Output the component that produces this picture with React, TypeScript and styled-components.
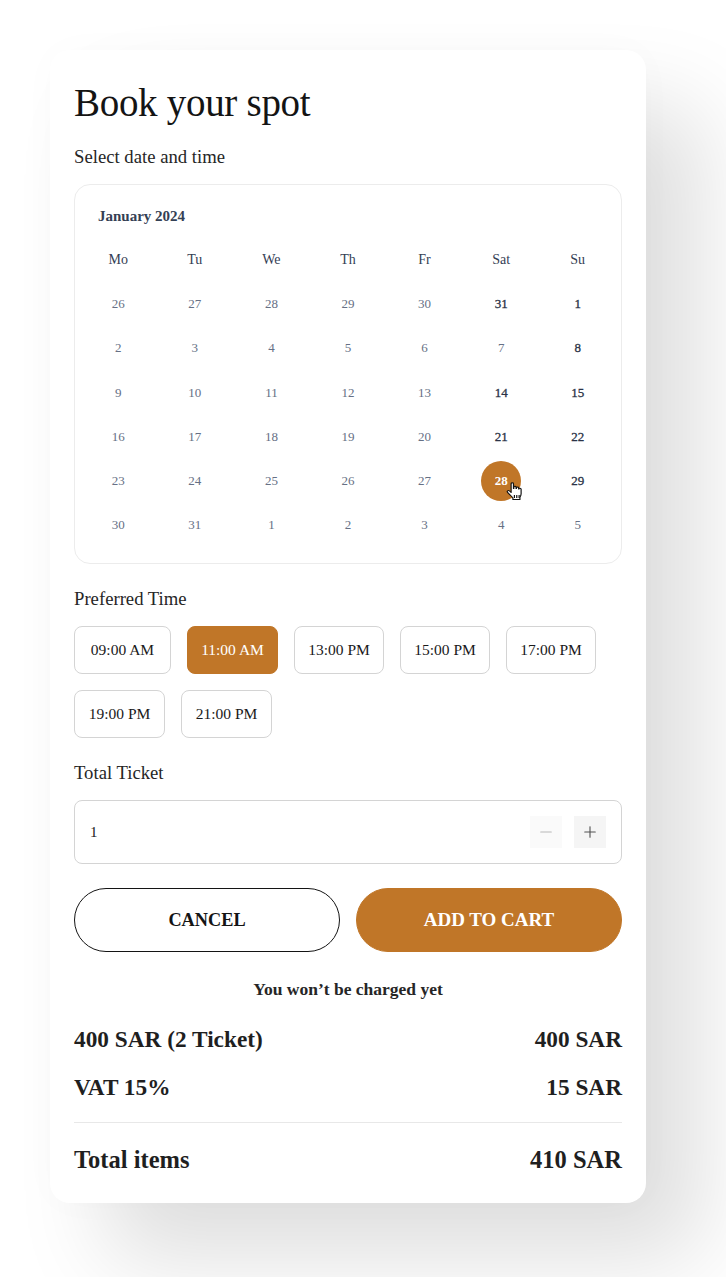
import { Minus, Plus } from "lucide-react";
import styled, { createGlobalStyle } from "styled-components";

const GlobalStyle = createGlobalStyle`
  html, body {
    margin: 0;
    padding: 0;
    background: #fff;
  }
  body {
    font-family: "Liberation Serif", "Times New Roman", serif;
    color: #1a1a1a;
  }
`;

const Page = styled.div`
  width: 726px;
  height: 1277px;
  padding: 50px 80px 74px 50px;
  box-sizing: border-box;
  overflow: hidden;
`;

const Card = styled.section`
  display: flex;
  flex-direction: column;
  height: 1153px;
  box-sizing: border-box;
  padding: 24px;
  background: #fff;
  border-radius: 20px;
  box-shadow: 56px 56px 90px rgba(0, 0, 0, 0.13), 0 0 40px rgba(0, 0, 0, 0.02);
`;

const Title = styled.h1`
  margin: 0 0 14px;
  font-size: 39px;
  line-height: 58px;
  font-weight: 400;
  letter-spacing: -0.3px;
  color: #141414;
`;

const Label = styled.div`
  margin-bottom: 16px;
  font-size: 18.7px;
  line-height: 22px;
  color: #262626;
`;

const Calendar = styled.div`
  height: 380px;
  box-sizing: border-box;
  margin-bottom: 24px;
  padding: 20px 5px 0;
  border: 1px solid #ececec;
  border-radius: 16px;
`;

const Month = styled.div`
  padding-left: 18px;
  margin-bottom: 11px;
  font-size: 15px;
  line-height: 22px;
  font-weight: 700;
  color: #344054;
`;

const CalendarGrid = styled.div`
  display: grid;
  grid-template-columns: repeat(7, 1fr);
  grid-auto-rows: 44.2px;
  width: 536px;
`;

const Cell = styled.div`
  position: relative;
  display: flex;
  align-items: center;
  justify-content: center;
`;

const Weekday = styled.span`
  font-size: 14px;
  color: #344054;
`;

const Day = styled.span<{ $tone: "muted" | "strong" | "selected" }>`
  display: flex;
  align-items: center;
  justify-content: center;
  width: 40px;
  height: 40px;
  border-radius: 50%;
  font-size: 13px;
  font-weight: ${({ $tone }) => ($tone === "selected" ? 700 : 400)};
  -webkit-text-stroke: ${({ $tone }) => ($tone === "strong" ? "0.3px" : "0")};
  color: ${({ $tone }) =>
    $tone === "selected" ? "#fff" : $tone === "strong" ? "#2b3347" : "#667085"};
  background: ${({ $tone }) => ($tone === "selected" ? "#c07628" : "transparent")};
`;

const Pointer = styled.svg`
  position: absolute;
  left: 42px;
  top: 23px;
  width: 20px;
  height: 19px;
`;

const TimeList = styled.div`
  display: flex;
  flex-wrap: wrap;
  gap: 16px 16px;
  margin-bottom: 24px;
`;

const TimeChip = styled.button<{ $width: number; $active?: boolean }>`
  width: ${({ $width }) => $width}px;
  height: 48px;
  padding: 0;
  border: 1px solid ${({ $active }) => ($active ? "#c07628" : "#d4d4d4")};
  border-radius: 8px;
  background: ${({ $active }) => ($active ? "#c07628" : "#fff")};
  color: ${({ $active }) => ($active ? "#fff" : "#1a1a1a")};
  font: 400 15.5px "Liberation Serif", serif;
`;

const Stepper = styled.div`
  display: flex;
  align-items: center;
  gap: 12px;
  height: 64px;
  box-sizing: border-box;
  margin-bottom: 24px;
  padding: 0 15px;
  border: 1px solid #d4d4d4;
  border-radius: 8px;
  font-size: 15px;
  color: #1a1a1a;
`;

const StepperValue = styled.span`
  flex: 1;
`;

const StepButton = styled.button<{ $disabled?: boolean }>`
  display: flex;
  align-items: center;
  justify-content: center;
  width: 32px;
  height: 32px;
  padding: 0;
  border: 0;
  background: ${({ $disabled }) => ($disabled ? "#fafafa" : "#f5f5f5")};
  color: ${({ $disabled }) => ($disabled ? "#b8b8b8" : "#525252")};
`;

const Actions = styled.div`
  display: grid;
  grid-template-columns: 1fr 1fr;
  gap: 16px;
  margin-bottom: 24px;
`;

const ActionButton = styled.button<{ $primary?: boolean }>`
  height: 64px;
  border-radius: 32px;
  border: 1px solid ${({ $primary }) => ($primary ? "#c07628" : "#141414")};
  background: ${({ $primary }) => ($primary ? "#c07628" : "#fff")};
  color: ${({ $primary }) => ($primary ? "#fff" : "#141414")};
  font: 700 ${({ $primary }) => ($primary ? 19 : 18.3)}px "Liberation Serif", serif;
`;

const Notice = styled.div`
  margin-bottom: 21px;
  text-align: center;
  font-size: 17.5px;
  line-height: 26px;
  font-weight: 700;
  color: #262626;
`;

const SummaryRow = styled.div<{ $total?: boolean }>`
  display: flex;
  justify-content: space-between;
  margin-bottom: ${({ $total }) => ($total ? 0 : 16)}px;
  font-size: ${({ $total }) => ($total ? 24.5 : 23.3)}px;
  line-height: ${({ $total }) => ($total ? 36 : 32)}px;
  font-weight: 700;
  color: #1f1f1f;
`;

const Divider = styled.hr`
  height: 1px;
  margin: 3px 0 19px;
  border: 0;
  background: #e8e8e8;
`;

const weekdays = ["Mo", "Tu", "We", "Th", "Fr", "Sat", "Su"];

const days = [
  26, 27, 28, 29, 30, 31, 1, 2, 3, 4, 5, 6, 7, 8, 9, 10, 11, 12, 13, 14, 15, 16,
  17, 18, 19, 20, 21, 22, 23, 24, 25, 26, 27, 28, 29, 30, 31, 1, 2, 3, 4, 5,
];

// indexes of the days drawn darker in the month grid
const strongDays = new Set([5, 6, 13, 19, 20, 26, 27, 34]);
const selectedDay = 33;

const times = [
  { label: "09:00 AM", width: 97 },
  { label: "11:00 AM", width: 91, active: true },
  { label: "13:00 PM", width: 90 },
  { label: "15:00 PM", width: 90 },
  { label: "17:00 PM", width: 90 },
  { label: "19:00 PM", width: 91 },
  { label: "21:00 PM", width: 91 },
];

function HandCursor() {
  return (
    <Pointer viewBox="0 0 17 19" preserveAspectRatio="none">
      <path
        d="M5.2 1.8c0-1.3 2-1.3 2 0v4.6l.3 0V5.2c0-1.2 1.9-1.2 1.9 0v1.4l.3 0V6c0-1.2 1.9-1.2 1.9 0v1l.3 0c0-1 1.8-1 1.8.2v4.6c0 1.6-.5 2.6-1 3.6v2.1H6.7v-1.8C5.5 14.2 3.8 12.5 2.2 10.4c-.9-1.2.6-2.4 1.6-1.4l1.4 1.4z"
        fill="#fff"
        stroke="#111"
        strokeWidth="1"
        strokeLinejoin="round"
      />
      <path d="M8 13v3M10 13v3M12 13v3" stroke="#111" strokeWidth="1" />
    </Pointer>
  );
}

export default function App() {
  return (
    <Page>
      <GlobalStyle />
      <Card>
        <Title>Book your spot</Title>
        <Label>Select date and time</Label>
        <Calendar>
          <Month>January 2024</Month>
          <CalendarGrid>
            {weekdays.map((day) => (
              <Cell key={day}>
                <Weekday>{day}</Weekday>
              </Cell>
            ))}
            {days.map((day, index) => (
              <Cell key={index}>
                <Day
                  $tone={
                    index === selectedDay
                      ? "selected"
                      : strongDays.has(index)
                        ? "strong"
                        : "muted"
                  }
                >
                  {day}
                </Day>
                {index === selectedDay && <HandCursor />}
              </Cell>
            ))}
          </CalendarGrid>
        </Calendar>

        <Label>Preferred Time</Label>
        <TimeList>
          {times.map((time) => (
            <TimeChip key={time.label} $width={time.width} $active={time.active}>
              {time.label}
            </TimeChip>
          ))}
        </TimeList>

        <Label>Total Ticket</Label>
        <Stepper>
          <StepperValue>1</StepperValue>
          <StepButton $disabled>
            <Minus size={18} strokeWidth={1.5} />
          </StepButton>
          <StepButton>
            <Plus size={18} strokeWidth={1.5} />
          </StepButton>
        </Stepper>

        <Actions>
          <ActionButton>CANCEL</ActionButton>
          <ActionButton $primary>ADD TO CART</ActionButton>
        </Actions>

        <Notice>You won’t be charged yet</Notice>
        <SummaryRow>
          <span>400 SAR (2 Ticket)</span>
          <span>400 SAR</span>
        </SummaryRow>
        <SummaryRow>
          <span>VAT 15%</span>
          <span>15 SAR</span>
        </SummaryRow>
        <Divider />
        <SummaryRow $total>
          <span>Total items</span>
          <span>410 SAR</span>
        </SummaryRow>
      </Card>
    </Page>
  );
}
